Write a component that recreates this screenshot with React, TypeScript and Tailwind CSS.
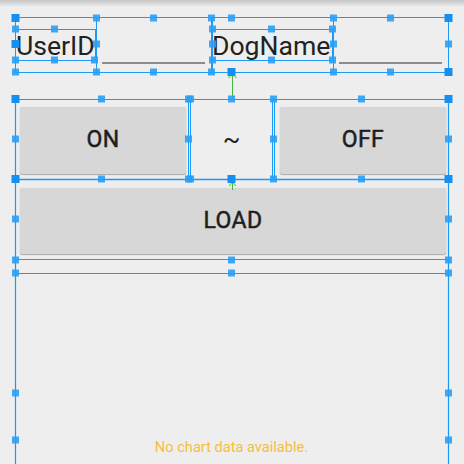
import React from "react";

const BLUE = "#1d98f4";
const HANDLE = "#2a9ff5";

type R = [number, number, number, number];

const boxes: R[] = [
  [15, 17.5, 448, 72.5],
  [15, 17.5, 96, 72.5],
  [15, 29.5, 95, 60.5],
  [96, 17.5, 211, 72.5],
  [212, 17.5, 333, 72.5],
  [212, 29.5, 332, 60.5],
  [333, 17.5, 448, 72.5],
  [15, 99.5, 448, 179.5],
  [15, 99.5, 188, 179.5],
  [190, 99.5, 272, 179.5],
  [274, 99.5, 448, 179.5],
  [15, 179.5, 448, 259.5],
  [15, 273.5, 448, 600],
];

const handles: [number, number, boolean?][] = [
  [15, 18, true], [96, 18], [153, 18], [211, 18], [231, 18], [333, 18], [390, 18], [448, 18, true],
  [15, 29], [54, 29], [212, 29], [271, 29], [332, 29],
  [15, 44, true], [96, 44], [212, 44], [333, 44], [448, 44],
  [15, 60], [54, 60], [94, 60], [212, 60], [271, 60], [332, 60],
  [15, 72], [96, 72], [153, 72], [211, 72], [231, 72, true], [333, 72], [390, 72], [448, 72, true],
  [15, 99, true], [101, 99], [188, 99], [190, 99], [231, 99], [273, 99], [361, 99], [448, 99, true],
  [15, 139], [188, 139], [273, 139], [448, 139],
  [15, 179, true], [101, 179], [188, 179], [190, 179], [231, 179, true], [273, 179], [361, 179], [448, 179, true],
  [15, 219], [448, 219],
  [15, 260], [231, 260], [448, 260],
  [15, 273], [231, 273], [448, 273],
  [15, 393], [448, 393], [15, 440], [448, 440],
];

function Overlay() {
  return (
    <svg className="absolute left-0 top-0 pointer-events-none" width="464" height="464" viewBox="0 0 464 464">
      {boxes.map(([x1, y1, x2, y2], i) => (
        <rect key={i} x={x1 + 0.5} y={y1} width={x2 - x1} height={y2 - y1} fill="none" stroke={BLUE} strokeWidth="1" />
      ))}
      <line x1="15.5" y1="99" x2="15.5" y2="464" stroke={BLUE} strokeWidth="1.2" />
      <line x1="448.5" y1="99" x2="448.5" y2="464" stroke={BLUE} strokeWidth="1.2" />
      <line x1="15" y1="179.5" x2="449" y2="179.5" stroke={BLUE} strokeWidth="1.6" />
      <g stroke="#3dbb3d" strokeWidth="1" fill="none">
        <line x1="232.5" y1="74" x2="232.5" y2="98" />
        <path d="M228.5 78 L232.5 74 L236.5 78" />
        <line x1="232.5" y1="182" x2="232.5" y2="190" />
        <path d="M229 186 L232.5 182 L236 186" />
      </g>
      {handles.map(([x, y, big], i) => (
        <rect
          key={i}
          x={x - (big ? 4 : 3.5) + 0.5}
          y={y - (big ? 4 : 3.5)}
          width={big ? 8 : 7}
          height={big ? 8 : 7}
          fill={big ? "#1690f0" : HANDLE}
          fillOpacity={big ? 1 : 0.9}
        />
      ))}
    </svg>
  );
}

function Btn({ label }: { label: string }) {
  return (
    <div className="flex h-full w-full items-center justify-center rounded-[2px] bg-[#d6d7d6] text-[23px] font-normal tracking-[0.4px] text-[#1e1e1e] [-webkit-text-stroke:0.5px_#1e1e1e] shadow-[0_1px_1px_rgba(0,0,0,0.28),0_0_1px_rgba(0,0,0,0.12)]">
      {label}
    </div>
  );
}

function Edit({ w }: { w: string }) {
  return (
    <div className={`${w} flex h-full flex-col justify-end px-[6px] pb-[8px]`}>
      <div className="h-[2px] w-full bg-[#8c8c8c]" />
    </div>
  );
}

export default function App() {
  return (
    <div
      className="relative h-[464px] w-[464px] overflow-hidden bg-[#eeeeee]"
      style={{ fontFamily: "Roboto, 'Noto Sans', sans-serif" }}
    >
      <div className="absolute left-0 top-0 h-[7px] w-full bg-gradient-to-b from-[#c4c4c4] to-[#eeeeee]" />
      <div className="flex h-full flex-col pl-[15px] pr-[16px] pt-[18px]">
        <div className="flex h-[54px] items-center">
          <div className="w-[81px] pl-[1px] text-[26.6px] leading-[31px] text-[#222]">UserID</div>
          <Edit w="w-[115px]" />
          <div className="w-[122px] pl-[1px] text-[26.6px] leading-[31px] text-[#222]">DogName</div>
          <Edit w="w-[115px]" />
        </div>
        <div className="h-[27px]" />
        <div className="flex h-[80px]">
          <div className="w-[174px] pb-[5px] pl-[5px] pr-[3px] pt-[8px]">
            <Btn label="ON" />
          </div>
          <div className="flex w-[85px] items-center justify-center text-[26px] text-[#222]">~</div>
          <div className="w-[174px] pb-[5px] pl-[6px] pr-[2px] pt-[8px]">
            <Btn label="OFF" />
          </div>
        </div>
        <div className="h-[80px] pb-[5px] pl-[5px] pr-[2px] pt-[9px]">
          <Btn label="LOAD" />
        </div>
        <div className="h-[14px]" />
        <div className="flex flex-1 flex-col items-center justify-end pb-[8px]">
          <div className="text-[14.6px] leading-[17px] text-[#f5be3e]">No chart data available.</div>
        </div>
      </div>
      <Overlay />
    </div>
  );
}
